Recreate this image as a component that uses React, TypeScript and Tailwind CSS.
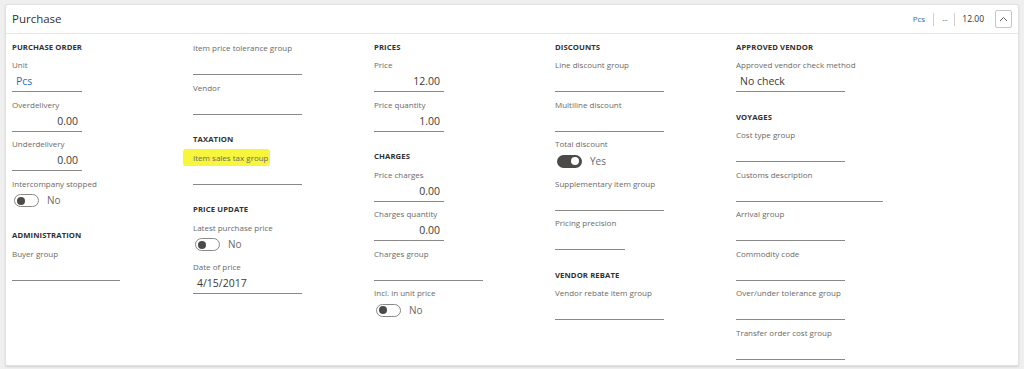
import React from "react";

type Item =
  | { kind: "heading"; text: string; first?: boolean }
  | { kind: "field"; label: string; value?: string; align?: "left" | "right"; w: number; blue?: boolean; highlight?: boolean }
  | { kind: "toggle"; label: string; on?: boolean };

const font = { fontFamily: '"Open Sans", "Noto Sans", sans-serif' };

function Heading({ text, first }: { text: string; first?: boolean }) {
  return (
    <div className={first ? "h-[17px]" : "h-[30.4px] pt-[13px]"}>
      <div className="text-[7.7px] leading-[13px] font-bold text-[#323130] tracking-[0.1px]">{text}</div>
    </div>
  );
}

function Field({ label, value, align, w, blue, highlight }: { label: string; value?: string; align?: "left" | "right"; w: number; blue?: boolean; highlight?: boolean }) {
  return (
    <div className="h-[39.6px]">
      <div className="text-[8px] leading-[14px] text-[#6b6967] whitespace-nowrap">
        {highlight ? (
          <span className="bg-[#f7f53c] -ml-[10px] pl-[10px] pr-[1px] py-[3px] rounded-[3px]">{label}</span>
        ) : (
          label
        )}
      </div>
      <div
        className={`h-[20px] border-b border-[#8a8886] px-[4px] text-[10.5px] leading-[18px] ${
          align === "right" ? "text-right" : "text-left"
        } ${blue ? "text-[#2a6ebb]" : "text-[#3b3a39]"}`}
        style={{ width: w }}
      >
        {value}
      </div>
    </div>
  );
}

function Toggle({ label, on }: { label: string; on?: boolean }) {
  return (
    <div className="h-[39.6px]">
      <div className="text-[8px] leading-[14px] text-[#6b6967] whitespace-nowrap">{label}</div>
      <div className="flex items-center h-[20px] pl-[2px] gap-[8px]">
        {on ? (
          <div className="w-[25px] h-[13px] rounded-full bg-[#4b4a49] flex items-center justify-end pr-[3px]">
            <div className="w-[8px] h-[8px] rounded-full bg-white" />
          </div>
        ) : (
          <div className="w-[25px] h-[13px] rounded-full border border-[#8a8886] flex items-center pl-[2px]">
            <div className="w-[8px] h-[8px] rounded-full bg-[#4b4a49]" />
          </div>
        )}
        <span className="text-[10px] text-[#6b6967] leading-[13px]">{on ? "Yes" : "No"}</span>
      </div>
    </div>
  );
}

const columns: Item[][] = [
  [
    { kind: "heading", text: "PURCHASE ORDER", first: true },
    { kind: "field", label: "Unit", value: "Pcs", w: 70, blue: true },
    { kind: "field", label: "Overdelivery", value: "0.00", align: "right", w: 70 },
    { kind: "field", label: "Underdelivery", value: "0.00", align: "right", w: 70 },
    { kind: "toggle", label: "Intercompany stopped" },
    { kind: "heading", text: "ADMINISTRATION" },
    { kind: "field", label: "Buyer group", w: 108 },
  ],
  [
    { kind: "field", label: "Item price tolerance group", w: 109 },
    { kind: "field", label: "Vendor", w: 109 },
    { kind: "heading", text: "TAXATION" },
    { kind: "field", label: "Item sales tax group", w: 109, highlight: true },
    { kind: "heading", text: "PRICE UPDATE" },
    { kind: "toggle", label: "Latest purchase price" },
    { kind: "field", label: "Date of price", value: "4/15/2017", w: 109 },
  ],
  [
    { kind: "heading", text: "PRICES", first: true },
    { kind: "field", label: "Price", value: "12.00", align: "right", w: 70 },
    { kind: "field", label: "Price quantity", value: "1.00", align: "right", w: 70 },
    { kind: "heading", text: "CHARGES" },
    { kind: "field", label: "Price charges", value: "0.00", align: "right", w: 70 },
    { kind: "field", label: "Charges quantity", value: "0.00", align: "right", w: 70 },
    { kind: "field", label: "Charges group", w: 109 },
    { kind: "toggle", label: "Incl. in unit price" },
  ],
  [
    { kind: "heading", text: "DISCOUNTS", first: true },
    { kind: "field", label: "Line discount group", w: 109 },
    { kind: "field", label: "Multiline discount", w: 109 },
    { kind: "toggle", label: "Total discount", on: true },
    { kind: "field", label: "Supplementary item group", w: 109 },
    { kind: "field", label: "Pricing precision", w: 70 },
    { kind: "heading", text: "VENDOR REBATE" },
    { kind: "field", label: "Vendor rebate item group", w: 109 },
  ],
  [
    { kind: "heading", text: "APPROVED VENDOR", first: true },
    { kind: "field", label: "Approved vendor check method", value: "No check", w: 109 },
    { kind: "heading", text: "VOYAGES" },
    { kind: "field", label: "Cost type group", w: 109 },
    { kind: "field", label: "Customs description", w: 147 },
    { kind: "field", label: "Arrival group", w: 109 },
    { kind: "field", label: "Commodity code", w: 109 },
    { kind: "field", label: "Over/under tolerance group", w: 109 },
    { kind: "field", label: "Transfer order cost group", w: 109 },
  ],
];

export default function App() {
  return (
    <div className="w-[1024px] h-[369px] bg-[#efefef] pt-[4px] pl-[5px] overflow-hidden" style={font}>
      <div className="w-[1014px] h-[362px] bg-white border border-[#e1e1e1] rounded-[2px] shadow-[0_1px_2px_rgba(0,0,0,0.12)]">
        <div className="h-[29px] border-b border-[#e6e6e6] flex items-center pl-[6px] pr-[6px]">
          <div className="text-[11.5px] text-[#323130]">Purchase</div>
          <div className="ml-auto flex items-center h-full">
            <span className="text-[8px] text-[#2a6ebb]">Pcs</span>
            <span className="w-px h-[13px] bg-[#d2d0ce] mx-[8px]" />
            <span className="text-[8px] text-[#605e5c]">--</span>
            <span className="w-px h-[13px] bg-[#d2d0ce] mx-[7px]" />
            <span className="text-[8.5px] text-[#323130]">12.00</span>
            <button className="ml-[11px] w-[17px] h-[18px] border border-[#c8c6c4] rounded-[2px] flex items-center justify-center bg-white">
              <svg width="9" height="6" viewBox="0 0 9 6" fill="none">
                <path d="M1 5 L4.5 1.5 L8 5" stroke="#605e5c" strokeWidth="1" />
              </svg>
            </button>
          </div>
        </div>
        <div className="flex pl-[6px] pt-[7px]">
          {columns.map((col, i) => (
            <div key={i} className="w-[181px] shrink-0">
              {col.map((it, j) =>
                it.kind === "heading" ? (
                  <Heading key={j} text={it.text} first={it.first} />
                ) : it.kind === "field" ? (
                  <Field key={j} {...it} />
                ) : (
                  <Toggle key={j} label={it.label} on={it.on} />
                )
              )}
            </div>
          ))}
        </div>
      </div>
    </div>
  );
}
